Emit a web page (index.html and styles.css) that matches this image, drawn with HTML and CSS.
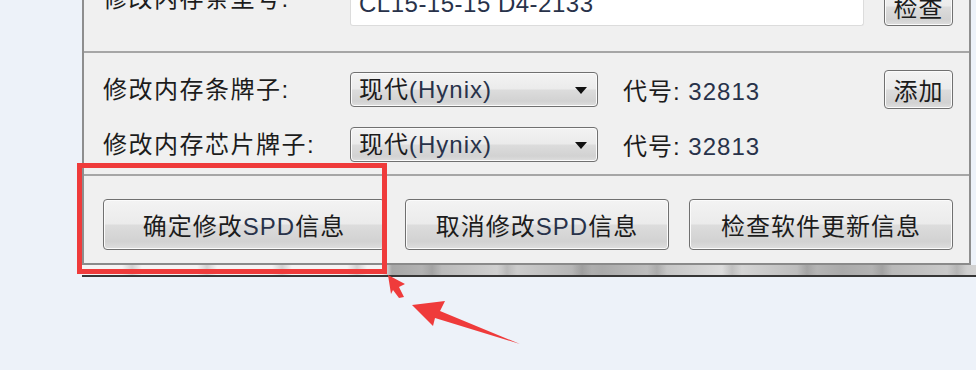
FILE: index.html
```html
<!DOCTYPE html>
<html lang="zh-CN">
<head>
    <meta charset="UTF-8">
    <title>修改SPD信息</title>
    <link rel="stylesheet" href="styles.css">
</head>
<body>
    <div class="window">
        <div class="panel">
            <div class="section section-top">
                <div class="label">修改内存条型号:</div>
                <div class="text-input"><span class="lat">CL15-15-15 D4-2133</span></div>
                <button class="btn btn-small">检查</button>
            </div>

            <div class="section section-brand">
                <div class="label">修改内存条牌子:</div>
                <div class="select">现代<span class="lat">(Hynix)</span><span class="caret"></span></div>
                <div class="code">代号: <span class="lat">32813</span></div>
                <button class="btn btn-small">添加</button>

                <div class="label">修改内存芯片牌子:</div>
                <div class="select">现代<span class="lat">(Hynix)</span><span class="caret"></span></div>
                <div class="code">代号: <span class="lat">32813</span></div>
            </div>

            <div class="section section-actions">
                <button class="btn btn-wide">确定修改<span class="lat">SPD</span>信息</button>
                <button class="btn">取消修改<span class="lat">SPD</span>信息</button>
                <button class="btn">检查软件更新信息</button>
            </div>
        </div>
        <div class="frame-edge"></div>
    </div>

    <!-- annotation overlay -->
    <div class="mark-box"></div>
    <svg class="mark-arrow" width="976" height="370" viewBox="0 0 976 370">
        <polygon points="388,275 405,284 399,287 404,297 399,298 393,290 391,294" fill="#ef3b3b"/>
        <polygon points="412,305 445,301 440,311 520,344 435,318 433,326" fill="#ef3b3b"/>
    </svg>
</body>
</html>
```

FILE: styles.css
```css
* {
    margin: 0;
    padding: 0;
    box-sizing: border-box;
}

body {
    background: #edf2f9;
    font-family: "Liberation Sans", "Noto Sans CJK SC", sans-serif;
    font-size: 24px;
    letter-spacing: 1px;
    color: #1c1c1c;
    overflow: hidden;
    width: 976px;
    height: 370px;
    position: relative;
}

.window {
    margin: -40px 0 0 82px;
}

.panel {
    width: 889px;
    background: #f0f0f0;
    border-left: 2px solid #8e8e8e;
    border-right: 2px solid #8e8e8e;
    border-bottom: 2px solid #8a8a8a;
}

.section {
    padding-left: 19px;
    padding-right: 16px;
}

.section-top {
    display: grid;
    grid-template-columns: 247px 514px 1fr;
    align-items: center;
    padding-top: 26px;
    padding-bottom: 25px;
}

.section-top .label {
    align-self: start;
}

.section-top .btn {
    justify-self: end;
}

.section-brand {
    display: grid;
    grid-template-columns: 247px 248px 1fr 69px;
    grid-auto-rows: 39px;
    row-gap: 16px;
    align-items: center;
    padding-top: 17px;
    padding-bottom: 10px;
    border-top: 2px solid #a6a6a6;
}

.section-actions {
    display: flex;
    gap: 20px;
    padding-top: 23px;
    padding-bottom: 13px;
    border-top: 2px solid #a6a6a6;
}

.label {
    line-height: 26px;
    white-space: nowrap;
    letter-spacing: 1.5px;
}

.lat {
    color: #28324a;
}

.text-input {
    height: 40px;
    background: #fff;
    border: 1px solid #dcdcdc;
    border-top: none;
    border-radius: 0 0 3px 3px;
    padding-left: 8px;
    line-height: 36px;
    letter-spacing: 0.5px;
    white-space: nowrap;
}

.btn {
    font: inherit;
    letter-spacing: inherit;
    color: inherit;
    height: 51px;
    width: 264px;
    border: 1px solid #707070;
    border-radius: 4px;
    background: linear-gradient(#f3f3f3 0%, #ebebeb 48%, #dcdcdc 52%, #d2d2d2 85%, #dedede 100%);
    box-shadow: inset 0 0 0 1px #fbfbfb;
}

.btn-wide {
    width: 282px;
}

.btn-small {
    width: 69px;
    height: 39px;
}

.select {
    position: relative;
    height: 35px;
    border: 1px solid #707070;
    border-radius: 4px;
    background: linear-gradient(#f3f3f3 0%, #ebebeb 48%, #dcdcdc 52%, #d2d2d2 85%, #dedede 100%);
    box-shadow: inset 0 0 0 1px #fbfbfb;
    padding-left: 8px;
    line-height: 33px;
    white-space: nowrap;
}

.caret {
    position: absolute;
    right: 10px;
    top: 14px;
    border-left: 6px solid transparent;
    border-right: 6px solid transparent;
    border-top: 7px solid #111;
}

.code {
    padding-left: 25px;
    white-space: nowrap;
}

.frame-edge {
    width: 894px;
    height: 12px;
    background:
        linear-gradient(90deg, transparent 0 300px, rgba(90, 90, 90, 0.5) 310px, rgba(130, 130, 130, 0.3) 420px, rgba(80, 80, 80, 0.45) 520px, rgba(150, 150, 150, 0.25) 640px, rgba(80, 80, 80, 0.45) 760px, rgba(130, 130, 130, 0.3) 894px),
        repeating-linear-gradient(90deg, #f4f4f4 0 40px, #d2d2d2 50px, #f4f4f4 60px, #f4f4f4 75px);
    border-bottom: 2px solid #363636;
}

.mark-box {
    position: absolute;
    left: 77px;
    top: 163px;
    width: 310px;
    height: 111px;
    border: 5px solid #ef3b3b;
}

.mark-arrow {
    position: absolute;
    left: 0;
    top: 0;
}
```
